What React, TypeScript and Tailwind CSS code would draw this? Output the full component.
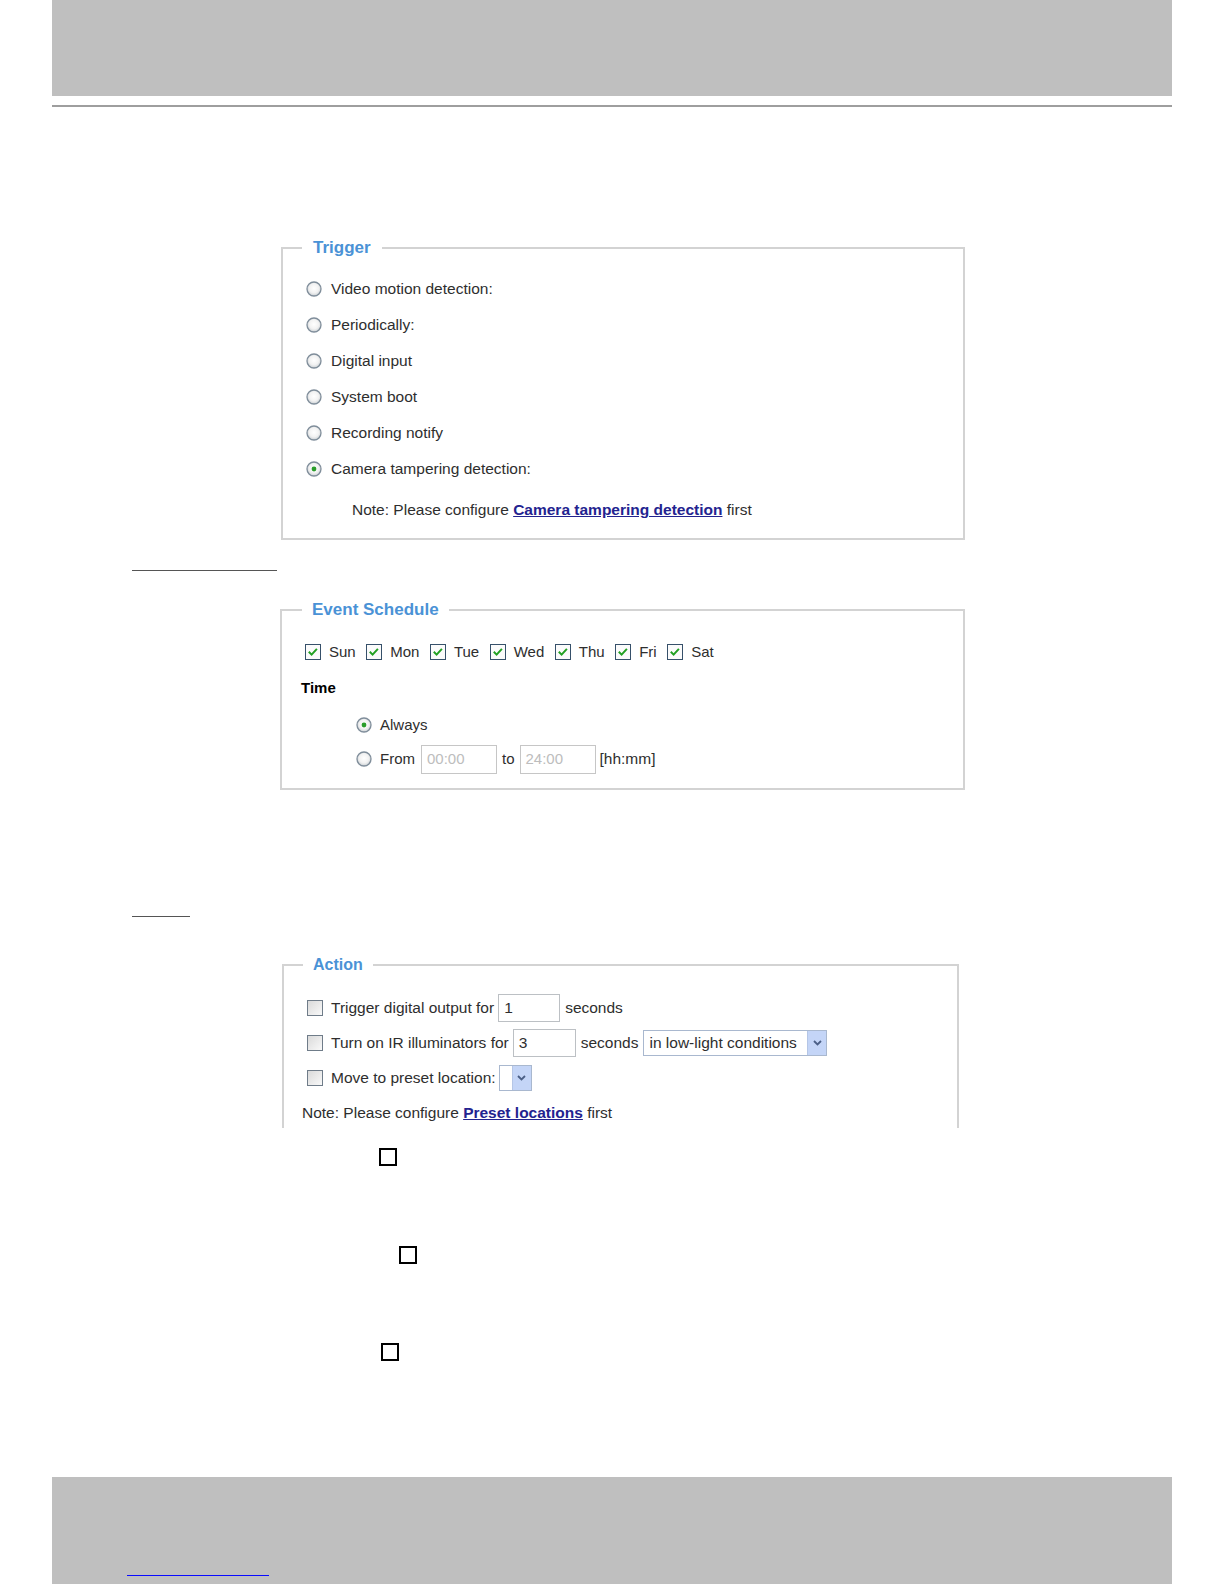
const font = "font-['Liberation_Sans',Arial,sans-serif]"

function Radio({ checked }: { checked?: boolean }) {
  return (
    <svg width="16" height="16" viewBox="0 0 16 16" className="shrink-0">
      <defs>
        <radialGradient id="radioFill" cx="50%" cy="45%" r="55%">
          <stop offset="0%" stopColor="#ffffff" />
          <stop offset="60%" stopColor="#f2f2f2" />
          <stop offset="100%" stopColor="#c9ced2" />
        </radialGradient>
      </defs>
      <circle cx="8" cy="8" r="7" fill="url(#radioFill)" stroke="#7f8d9a" strokeWidth="1.3" />
      {checked && <circle cx="8" cy="8" r="2.4" fill="#2a9d2a" />}
    </svg>
  )
}

function DayCheck() {
  return (
    <svg width="16" height="16" viewBox="0 0 16 16" className="shrink-0">
      <rect x="0.5" y="0.5" width="15" height="15" fill="#fbfbfb" stroke="#36506a" />
      <path d="M3.8 7.8 L6.6 10.6 L11.9 4.9" fill="none" stroke="#22a022" strokeWidth="2" />
    </svg>
  )
}

function EmptyCheck() {
  return (
    <svg width="16" height="16" viewBox="0 0 16 16" className="shrink-0">
      <defs>
        <linearGradient id="cbFill" x1="0" y1="0" x2="1" y2="1">
          <stop offset="0%" stopColor="#d9d9d9" />
          <stop offset="100%" stopColor="#fafafa" />
        </linearGradient>
      </defs>
      <rect x="0.5" y="0.5" width="15" height="15" fill="url(#cbFill)" stroke="#6f7c89" />
    </svg>
  )
}

function SelectButton() {
  return (
    <div className="w-[19px] h-full bg-[#c4d5f7] border-l border-[#b5c6e6] flex items-center justify-center">
      <svg width="9" height="6" viewBox="0 0 9 6">
        <path d="M1 1 L4.5 4.5 L8 1" fill="none" stroke="#4b5f86" strokeWidth="1.8" />
      </svg>
    </div>
  )
}

const DAYS = ['Sun', 'Mon', 'Tue', 'Wed', 'Thu', 'Fri', 'Sat']

const TRIGGERS = [
  'Video motion detection:',
  'Periodically:',
  'Digital input',
  'System boot',
  'Recording notify',
]

export default function App() {
  return (
    <div className={`w-[1224px] min-h-[1584px] bg-white overflow-hidden ${font}`}>
      {/* header band */}
      <div className="ml-[52px] w-[1120px] h-[96px] bg-[#bfbfbf]" />
      <div className="ml-[52px] w-[1120px] h-[2px] mt-[9px] bg-[#9e9e9e]" />

      {/* Trigger */}
      <fieldset className="ml-[281px] mt-[131px] w-[684px] h-[302px] border-2 border-[#d3d3d3] text-[15.5px] text-[#2e2e2e]">
        <legend className="ml-[19px] px-[11px] text-[17px] leading-[20px] font-bold text-[#4a92d6]">Trigger</legend>
        <div className="pt-[13px] pl-[23px]">
          {TRIGGERS.map((t) => (
            <div key={t} className="h-[36px] flex items-center gap-[9px]">
              <Radio />
              <span>{t}</span>
            </div>
          ))}
          <div className="h-[36px] flex items-center gap-[9px]">
            <Radio checked />
            <span>Camera tampering detection:</span>
          </div>
          <div className="mt-[5px] h-[36px] flex items-center pl-[46px]">
            <span>
              Note: Please configure{' '}
              <a className="font-bold underline text-[#23238f]">Camera tampering detection</a> first
            </span>
          </div>
        </div>
      </fieldset>

      <div className="ml-[132px] mt-[30px] w-[145px] h-px bg-[#555]" />

      {/* Event Schedule */}
      <fieldset className="ml-[280px] mt-[29px] w-[685px] h-[190px] border-2 border-[#d3d3d3] text-[15px] text-[#2e2e2e]">
        <legend className="ml-[20px] px-[10px] text-[17px] leading-[20px] font-bold text-[#4a92d6]">Event Schedule</legend>
        <div className="pt-[17px]">
          <div className="h-[30px] flex items-center gap-[10.5px] pl-[23px]">
            {DAYS.map((d) => (
              <label key={d} className="flex items-center gap-[8px]">
                <DayCheck />
                <span>{d}</span>
              </label>
            ))}
          </div>
          <div className="mt-[6px] h-[30px] flex items-center pl-[19px] font-bold text-black">Time</div>
          <div className="mt-[7px] h-[30px] flex items-center gap-[8px] pl-[74px]">
            <Radio checked />
            <span>Always</span>
          </div>
          <div className="mt-[4px] h-[30px] flex items-center pl-[74px]">
            <Radio />
            <span className="ml-[8px]">From</span>
            <div className="ml-[6px] w-[76px] h-[29px] border border-[#c6c6c6] flex items-center pl-[5px] text-[#bdbdbd]">00:00</div>
            <span className="ml-[5px]">to</span>
            <div className="ml-[5px] w-[76px] h-[29px] border border-[#c6c6c6] flex items-center pl-[5px] text-[#bdbdbd]">24:00</div>
            <span className="ml-[4px] text-[15.5px]">[hh:mm]</span>
          </div>
        </div>
      </fieldset>

      <div className="ml-[132px] mt-[126px] w-[58px] h-px bg-[#555]" />

      {/* Action */}
      <fieldset className="ml-[282px] mt-[38px] w-[677px] h-[173px] border-2 border-b-0 border-[#d3d3d3] overflow-hidden text-[15.5px] text-[#2e2e2e]">
        <legend className="ml-[19px] px-[10px] text-[16px] leading-[20px] font-bold text-[#4a92d6]">Action</legend>
        <div className="pt-[15px] pl-[23px]">
          <div className="h-[35px] flex items-center">
            <EmptyCheck />
            <span className="ml-[8px]">Trigger digital output for</span>
            <div className="ml-[4px] w-[62px] h-[28px] border border-[#bcc0c4] flex items-center pl-[5px]">1</div>
            <span className="ml-[5px]">seconds</span>
          </div>
          <div className="h-[35px] flex items-center">
            <EmptyCheck />
            <span className="ml-[8px]">Turn on IR illuminators for</span>
            <div className="ml-[4px] w-[63px] h-[28px] border border-[#bcc0c4] flex items-center pl-[5px]">3</div>
            <span className="ml-[5px]">seconds</span>
            <div className="ml-[5px] w-[184px] h-[26px] border border-[#a9b8cf] flex items-stretch">
              <span className="flex-1 flex items-center pl-[5px]">in low-light conditions</span>
              <SelectButton />
            </div>
          </div>
          <div className="h-[35px] flex items-center">
            <EmptyCheck />
            <span className="ml-[8px]">Move to preset location:</span>
            <div className="ml-[3px] w-[33px] h-[26px] border border-[#a9b8cf] flex items-stretch justify-end">
              <SelectButton />
            </div>
          </div>
          <div className="h-[35px] flex items-center -ml-[5px]">
            <span>
              Note: Please configure <a className="font-bold underline text-[#23238f]">Preset locations</a> first
            </span>
          </div>
        </div>
      </fieldset>

      {/* loose check squares */}
      <div className="ml-[379px] mt-[20px] w-[18px] h-[18px] border-2 border-black" />
      <div className="ml-[399px] mt-[80px] w-[18px] h-[18px] border-2 border-black" />
      <div className="ml-[381px] mt-[79px] w-[18px] h-[18px] border-2 border-black" />

      {/* footer band */}
      <div className="ml-[52px] mt-[116px] w-[1120px] h-[107px] bg-[#bfbfbf] pt-[98px] pl-[75px]">
        <div className="w-[142px] h-px bg-[#0a0aff]" />
      </div>
    </div>
  )
}
